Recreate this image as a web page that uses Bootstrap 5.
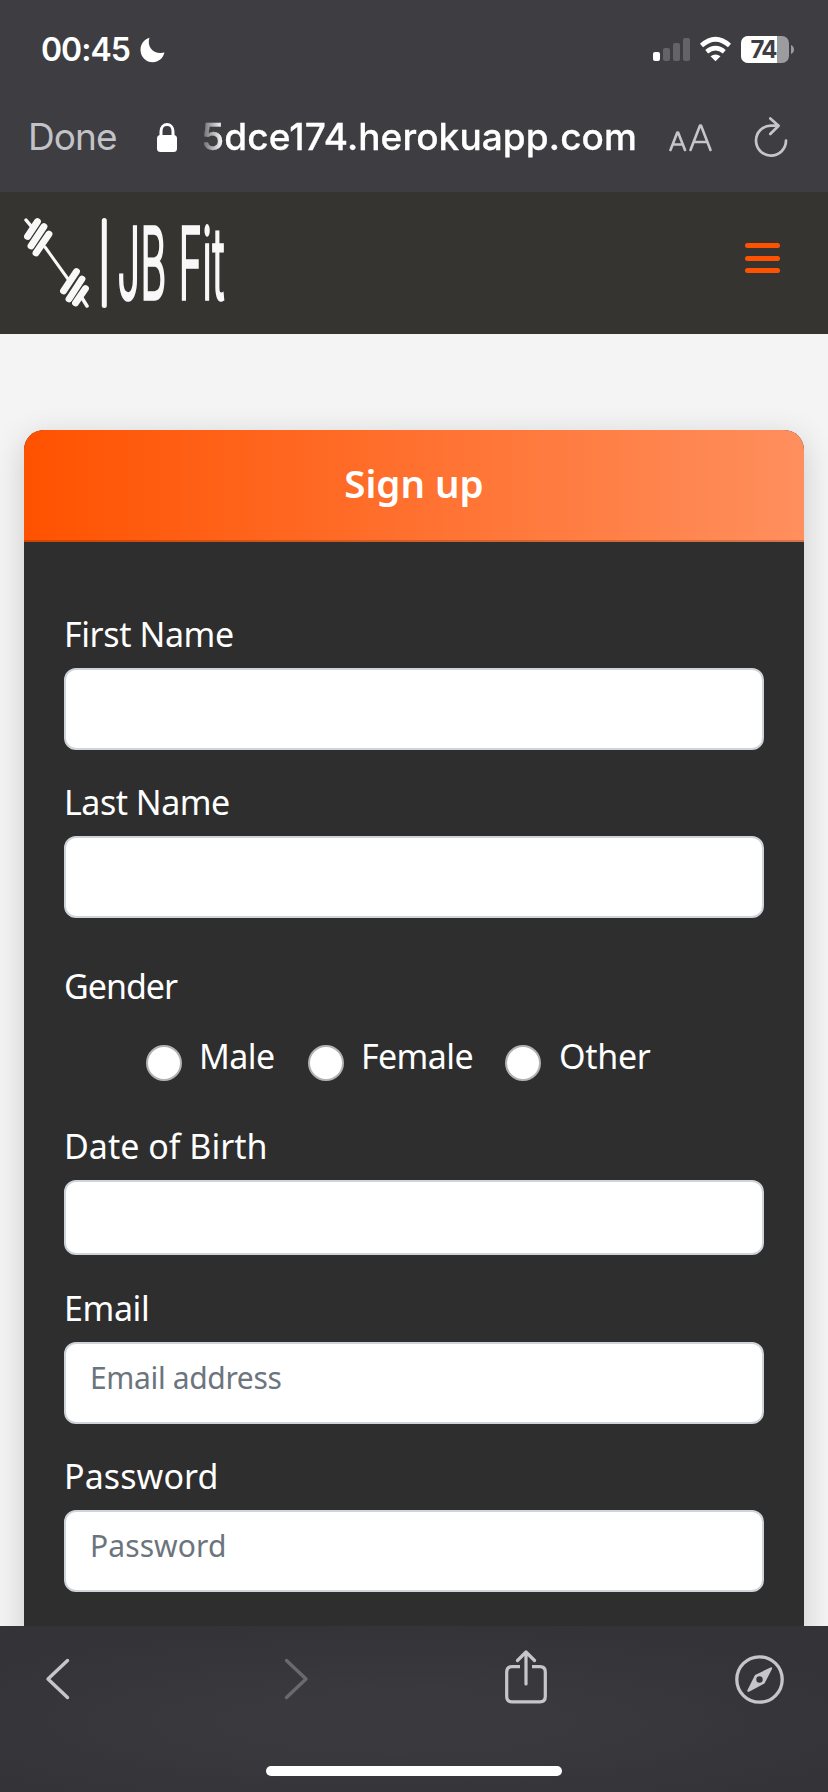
<!DOCTYPE html>
<html lang="en">
<head>
<meta charset="utf-8">
<meta name="viewport" content="width=device-width, initial-scale=1">
<title>JB Fit - Sign up</title>
<link href="https://cdn.jsdelivr.net/npm/bootstrap@5.3.0/dist/css/bootstrap.min.css" rel="stylesheet">
<style>
body{background:#f4f4f4;height:1792px;overflow:hidden;font-family:"Noto Sans",sans-serif}
svg{display:block;flex:none}
.phone-top{background:#3d3d42;height:192px;font-family:Inter,sans-serif;color:#fff}
.status-row{height:100px;padding:0 33px 0 41px}
.clock{font-size:32px;font-weight:600;line-height:100px;letter-spacing:-1px;width:92px}
.url-row{height:76px;padding:0 40px 0 28px;line-height:72px;font-size:37px}
.done{color:#c2c2c7;width:129px;letter-spacing:-.9px;margin-top:-2px}
.host{width:444px;margin:-2px 0 0 16px;direction:rtl;overflow:hidden;white-space:nowrap;font-weight:500;letter-spacing:.1px;-webkit-text-stroke:.3px #fff;-webkit-mask-image:linear-gradient(90deg,transparent,rgba(0,0,0,.25) 10px,#000 30px);mask-image:linear-gradient(90deg,transparent,rgba(0,0,0,.25) 10px,#000 30px)}
.site-nav{background:#363430;height:142px;padding:0 48px 0 24px}
.toggler{width:35px;margin-bottom:10px}
.toggler span{height:5px;border-radius:3px;background:#ff5200}
.page-view{height:1292px;padding:96px 24px 0;overflow:hidden}
.signup{height:1300px;border:0;border-radius:20px;background:#2e2e2e;color:#fff;box-shadow:0 8px 32px rgba(0,0,0,.17)}
.signup .card-header{height:112px;padding:0;border-radius:20px 20px 0 0;border-bottom:2px solid rgba(0,0,0,.175);background:linear-gradient(90deg,#ff5200,#ff8f5e);font-size:38.500px;font-weight:600;line-height:107px}
.signup .card-body{padding:70px 40px 0}
.field{margin-bottom:28px}
.field label,.group-title,.choice label{display:block;height:45px;line-height:45px;font-size:34px;white-space:nowrap;letter-spacing:-.4px}
.field label{margin-bottom:11px}
.field .form-control{height:82px;border:2px solid #ced4da;border-radius:12px;padding:0 24px 12px;font-size:30px;color:#212529;background:#fff}
.field .form-control::placeholder{color:#6c757d}
.field .short{height:75px}
.field + .field{padding-top:2px}
.group-title{margin-top:46px;letter-spacing:-1px!important}
.choices{margin:25px 0 45px 82px;height:45px}
.choice .form-check-input{width:36px;height:36px;margin:11px 17px 0 0;border:2px solid #b3b3b3;background:#fff;float:none;flex:none}
.choice label{letter-spacing:-.6px}
.phone-bottom{height:166px;background:radial-gradient(ellipse 65% 60% at 48% 58%,#3a393d 30%,#333338 100%)}
.tools{height:106px;padding:0 44px 0 45px}
.home-bar{width:296px;height:10px;border-radius:5px;margin-top:34px;background:#fff}
</style>
</head>
<body>
<header class="phone-top">
  <div class="status-row d-flex align-items-center">
    <span class="clock">00:45</span>
    <svg class="me-auto" style="margin-left:7px" width="26" height="26" viewBox="0 0 26 26"><path fill="#fff" d="M9.500 .8C6.500 9.500 13 18 24.500 15.600C23 21.500 18.500 25.200 12.800 25.200A12.200 12.200 0 0 1 .5 13C.5 7 4 2.400 9.500 .8Z"/></svg>
    <svg width="142" height="30" viewBox="653 35 142 30">
      <rect x="653" y="52" width="7" height="9" rx="2" fill="#fff"/>
      <g fill="#636368"><rect x="663" y="48" width="7" height="13" rx="2"/><rect x="673" y="43" width="7" height="18" rx="2"/><rect x="683" y="38" width="7" height="23" rx="2"/></g>
      <g fill="none" stroke="#fff" stroke-width="4.600"><path d="M701.500 45.500Q715.500 33 729.500 45.500"/><path d="M706.700 51.700Q715.500 44.500 724.300 51.700"/></g>
      <path fill="#fff" d="M710.500 56.200Q715.500 52.600 720.500 56.200L715.500 61.200Z"/>
      <rect x="741" y="36" width="48" height="27" rx="7" fill="#9c9c9f"/>
      <path fill="#fff" d="M748 36H777V63H748A7 7 0 0 1 741 56V43A7 7 0 0 1 748 36Z"/>
      <path fill="#9c9c9f" d="M791 45Q794 46.500 794 49.500T791 54Z"/>
      <text x="750.500" y="58.300" font-family="Inter" font-size="24" font-weight="700" fill="#3d3d42" textLength="27">74</text>
    </svg>
  </div>
  <div class="url-row d-flex align-items-center">
    <span class="done">Done</span>
    <svg width="20" height="30" viewBox="0 0 20 30"><rect y="12" width="20" height="17" rx="3.500" fill="#fff"/><path d="M4 14V8.500C4 -.8 16 -.8 16 8.500V14" fill="none" stroke="#fff" stroke-width="3"/></svg>
    <span class="host"><bdi>5dce174.herokuapp.com</bdi></span>
    <svg width="44" height="30" viewBox="0 0 44 30" style="margin-left:32px" fill="none" stroke="#c5c5ca" stroke-width="2.600" stroke-linecap="round" stroke-linejoin="round"><path d="M1.500 27L8.300 9.500H9.100L16 27M4 21.500H13.500"/><path d="M21.500 27L31 2.500H32L41.500 27M25 19H38"/></svg>
    <svg class="ms-auto" width="34" height="42" viewBox="0 0 34 42" fill="none" stroke="#c5c5ca" stroke-width="2.700" stroke-linecap="round" stroke-linejoin="round"><path d="M24 8.600H17A15 15 0 1 0 32 23.600M16.300 1.500L24.600 8.700L16.300 17"/></svg>
  </div>
</header>
<nav class="site-nav d-flex align-items-center justify-content-between">
  <svg width="204" height="92" viewBox="24 217 204 92" overflow="visible" fill="#f8f8f8" stroke="#f8f8f8" stroke-linecap="round">
    <path d="M45 247L68 279" stroke-width="3"/>
    <path d="M26 220L31 226M82 298L87 306" stroke-width="3.500" fill="none"/>
    <g stroke-width="6.800"><path d="M37.500 221.500L27.500 236.500M44 226.500L31 246M49 234L36 253"/></g>
    <g stroke-width="6.800"><path d="M76.500 271.500L63.500 291M82 279L69 299M85.500 288.500L75.500 303"/></g>
    <path d="M104.300 220.500V305.500" stroke-width="5"/>
    <text transform="translate(117.500 299) scale(.4 1)" font-family="Inter" font-weight="300" font-size="99" stroke-width="2.600" vector-effect="non-scaling-stroke" textLength="267" lengthAdjust="spacing">JB Fit</text>
  </svg>
  <div class="toggler d-grid" style="row-gap:7.500px"><span></span><span></span><span></span></div>
</nav>
<main class="page-view">
  <div class="card signup">
    <div class="card-header text-center">Sign up</div>
    <div class="card-body">
      <div class="field"><label for="first">First Name</label><input id="first" class="form-control"></div>
      <div class="field"><label for="last" style="letter-spacing:-.5px">Last Name</label><input id="last" class="form-control"></div>
      <div class="group-title">Gender</div>
      <div class="choices d-flex">
        <div class="choice d-flex" style="width:162px"><input class="form-check-input" type="radio" name="gender" id="male"><label for="male">Male</label></div>
        <div class="choice d-flex" style="width:197px"><input class="form-check-input" type="radio" name="gender" id="female"><label for="female">Female</label></div>
        <div class="choice d-flex"><input class="form-check-input" type="radio" name="gender" id="other"><label for="other" class="ps-0" style="letter-spacing:-.3px;margin-left:1px">Other</label></div>
      </div>
      <div class="field" style="margin-bottom:29px"><label for="dob" style="letter-spacing:0">Date of Birth</label><input id="dob" class="form-control short"></div>
      <div class="field"><label for="email">Email</label><input id="email" class="form-control" placeholder="Email address" style="letter-spacing:-.35px"></div>
      <div class="field"><label for="pw" style="letter-spacing:.1px">Password</label><input id="pw" class="form-control" placeholder="Password" style="letter-spacing:.1px"></div>
    </div>
  </div>
</main>
<footer class="phone-bottom">
  <div class="tools d-flex align-items-center">
    <svg width="25" height="42" viewBox="0 0 25 42" fill="none" stroke="#c5c5ca" stroke-width="3.400" stroke-linecap="round" stroke-linejoin="round"><path d="M22.500 2.500L3 21L22.500 39.500"/></svg>
    <svg style="margin-left:214px" width="25" height="42" viewBox="0 0 25 42" fill="none" stroke="#6a6a6e" stroke-width="3.400" stroke-linecap="round" stroke-linejoin="round"><path d="M2.500 2.500L22 21L2.500 39.500"/></svg>
    <svg style="margin:0 0 4px 196px" width="42" height="54" viewBox="0 0 42 54" fill="none" stroke="#c5c5ca" stroke-width="3.200" stroke-linejoin="round"><path d="M15 16.700H7Q1.700 16.700 1.700 22V46.500Q1.700 51.800 7 51.800H35Q40.300 51.800 40.300 46.500V22Q40.300 16.700 35 16.700H27"/><path stroke-linecap="round" d="M21 34V2.500M12.500 10.500L21 2L29.500 10.500"/></svg>
    <svg class="ms-auto" width="49" height="49" viewBox="0 0 49 49"><circle cx="24.500" cy="24.500" r="22.700" fill="none" stroke="#c5c5ca" stroke-width="3.300"/><path fill="#c5c5ca" fill-rule="evenodd" d="M35.500 12.500Q37.700 11.800 37 14L29.500 28.500L14 36.700Q11.800 37.200 12.500 35L20 20ZM24.500 21.300A3.200 3.200 0 1 0 24.500 27.700A3.200 3.200 0 1 0 24.500 21.300Z"/></svg>
  </div>
  <div class="home-bar mx-auto"></div>
</footer>
<script src="https://cdn.jsdelivr.net/npm/bootstrap@5.3.0/dist/js/bootstrap.bundle.min.js"></script>
</body>
</html>
